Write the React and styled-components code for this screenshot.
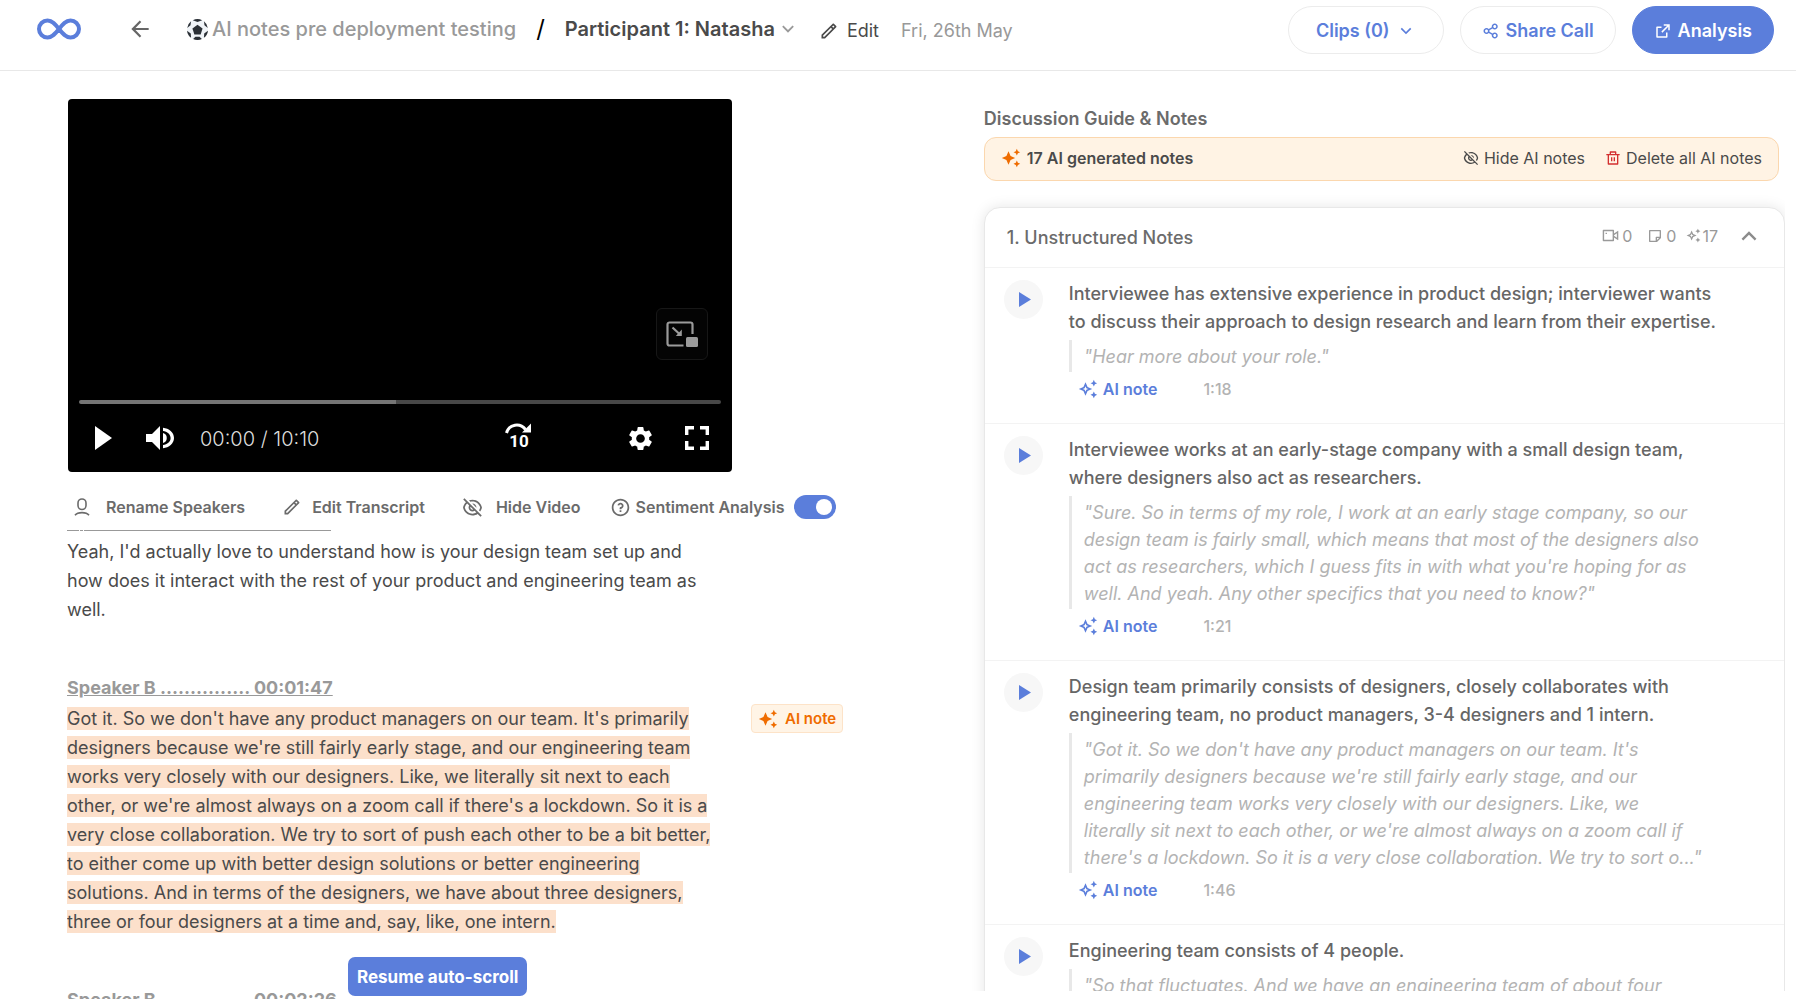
import React from "react";
import styled, { createGlobalStyle } from "styled-components";
import {
  RiPencilLine,
  RiEyeOffLine,
  RiQuestionLine,
  RiShareLine,
  RiExternalLinkLine,
  RiDeleteBinLine,
  RiVidiconLine,
  RiStickyNoteLine,
  RiArrowLeftLine,
  RiArrowDownSLine,
  RiArrowUpSLine,
} from "react-icons/ri";
import { MdAutoAwesome, MdOutlineAutoAwesome, MdSettings } from "react-icons/md";

const BLUE = "#5b7edb";
const ORANGE = "#ef6c00";

const GlobalStyle = createGlobalStyle`
  * { box-sizing: border-box; }
  body {
    margin: 0;
    background: #fff;
    color: #4a4a4a;
    font-family: Inter, "Liberation Sans", sans-serif;
    font-size: 16px;
  }
  h1, h2, h3, p, ul, blockquote { margin: 0; padding: 0; }
  ul { list-style: none; }
  svg { display: block; flex: none; }
`;

const Page = styled.div`
  display: flex;
  flex-direction: column;
  height: 100vh;
  overflow: hidden;
`;

const PlainButton = styled.button`
  display: inline-flex;
  align-items: center;
  padding: 0;
  border: 0;
  background: none;
  color: inherit;
  font: inherit;
  cursor: pointer;
`;

/* ---------- Header ---------- */

const Header = styled.header`
  display: flex;
  align-items: center;
  flex: none;
  height: 71px;
  padding: 0 22px 18px 36px;
  border-bottom: 1px solid #e8e8e8;
`;

const HomeLink = styled.a`
  display: flex;
  margin-top: 6px;
`;

const BackButton = styled(PlainButton)`
  margin: 6px 34px 0 45px;
  color: #666;
`;

const ProjectLink = styled.a`
  display: flex;
  align-items: center;
  gap: 4px;
  margin-top: 6px;
  color: #999;
  font-size: 20px;
  font-weight: 500;
  line-height: 28px;
  text-decoration: none;
  white-space: nowrap;
`;

const Slash = styled.span`
  margin: 6px 20px 0;
  color: #000;
  font-size: 24px;
  line-height: 28px;
`;

const ParticipantButton = styled(PlainButton)`
  gap: 2px;
  margin-top: 6px;
  font-size: 20px;
  font-weight: 600;
  line-height: 28px;
  white-space: nowrap;

  svg { color: #999; }
`;

const EditButton = styled(PlainButton)`
  gap: 8px;
  margin: 10px 22px 0 20px;
  font-size: 18px;
  line-height: 28px;
`;

const CallDate = styled.span`
  margin-top: 10px;
  color: #999;
  font-size: 18px;
  line-height: 28px;
  white-space: nowrap;
`;

const HeaderActions = styled.div`
  display: flex;
  gap: 16px;
  margin-left: auto;
  padding-top: 8px;
`;

const PillButton = styled.button`
  display: inline-flex;
  align-items: center;
  justify-content: center;
  gap: 6px;
  height: 48px;
  padding: 1px ${(p) => (p.$wide ? 27 : 21)}px 0;
  border: 1px solid ${(p) => (p.$filled ? BLUE : "#ececec")};
  border-radius: 24px;
  background: ${(p) => (p.$filled ? BLUE : "#fff")};
  color: ${(p) => (p.$filled ? "#fff" : BLUE)};
  font: 600 18px/24px Inter, "Liberation Sans", sans-serif;
  white-space: nowrap;
  cursor: pointer;
`;

/* ---------- Columns ---------- */

const Columns = styled.main`
  display: grid;
  grid-template-columns: 27fr 23fr;
  flex: 1;
  min-height: 0;
`;

const CallColumn = styled.section`
  position: relative;
  display: flex;
  flex-direction: column;
  min-height: 0;
  padding: 28px 0 0 67px;
`;

const NotesColumn = styled.section`
  min-height: 0;
  margin: 0 11px 8px 0;
  padding: 34px 0 0 14px;
  overflow: hidden;
`;

/* ---------- Video player ---------- */

const Player = styled.div`
  display: flex;
  flex-direction: column;
  justify-content: flex-end;
  flex: none;
  width: 100%;
  max-width: 664px;
  aspect-ratio: 664 / 373;
  margin-left: 1px;
  padding: 0 11px 12px;
  border-radius: 4px;
  background: #000;
  color: #fff;
`;

const PipButton = styled(PlainButton)`
  align-self: flex-end;
  justify-content: center;
  width: 52px;
  height: 52px;
  margin: 0 13px 40px 0;
  border: 1px solid #171717;
  border-radius: 6px;
  background: #040404;
  color: #9b9b9b;
`;

const SeekBar = styled.input`
  appearance: none;
  width: 100%;
  height: 4px;
  margin: 0;
  border-radius: 2px;
  background: linear-gradient(to right, #757575 317px, #484848 317px);

  &::-webkit-slider-thumb {
    appearance: none;
    width: 0;
    height: 4px;
  }
`;

const Controls = styled.div`
  display: flex;
  align-items: center;
  height: 44px;
  margin-top: 12px;
  padding: 0 12px 0 16px;
`;

const Time = styled.span`
  margin: 0 auto 0 26px;
  padding-top: 1px;
  color: #ddd;
  font-size: 20px;
  font-weight: 300;
  line-height: 24px;
`;

const ControlGroup = styled.div`
  display: flex;
  align-items: center;
  gap: ${(p) => p.$gap}px;
`;

/* ---------- Transcript ---------- */

const Tools = styled.div`
  display: flex;
  align-items: center;
  flex: none;
  height: 46px;
  margin-top: 12px;
  padding-left: 7px;
  color: #6b6b6b;
  font-size: 16px;
  font-weight: 600;
  line-height: 24px;
  white-space: nowrap;
`;

const ToolButton = styled(PlainButton)`
  gap: ${(p) => p.$gap}px;
  margin-right: ${(p) => p.$after}px;
`;

const ToggleLabel = styled.label`
  display: inline-flex;
  align-items: center;
  gap: 5px;
`;

const Toggle = styled.input`
  appearance: none;
  display: flex;
  align-items: center;
  justify-content: flex-end;
  width: 42px;
  height: 24px;
  margin: 0 0 0 4px;
  padding: 0 4px;
  border-radius: 12px;
  background: ${BLUE};

  &::before {
    content: "";
    width: 16px;
    height: 16px;
    border-radius: 8px;
    background: #fff;
  }
`;

const Transcript = styled.div`
  flex: 1;
  min-height: 0;
  overflow: hidden;
`;

const SpeakerRule = styled.hr`
  width: 264px;
  height: 1px;
  margin: 0 0 6px;
  border: 0;
  background: linear-gradient(
    to right,
    #999 12px, transparent 12px 13px,
    #999 13px 16px, transparent 16px 17px,
    #999 17px
  );
`;

const Turns = styled.div`
  display: flex;
  flex-direction: column;
  gap: 49px;
`;

const Speaker = styled.h3`
  margin-bottom: 2px;
  color: #999;
  font-size: 18px;
  font-weight: 700;
  line-height: 29px;
  text-decoration: underline;
`;

const TurnBody = styled.div`
  display: flex;
  align-items: flex-start;
  gap: 34px;
`;

const Speech = styled.p`
  flex: 0 1 650px;
  font-size: 18px;
  line-height: 29px;
`;

const Highlight = styled.mark`
  padding: 1px 0;
  background: #fce0cb;
  color: inherit;
`;

const NoteTag = styled.span`
  display: flex;
  align-items: center;
  gap: 7px;
  height: 29px;
  padding: 0 6px;
  border: 1px solid #fde3c8;
  border-radius: 4px;
  background: #fff4e6;
  color: ${ORANGE};
  font-size: 15px;
  font-weight: 600;
  white-space: nowrap;
`;

const ResumeButton = styled.button`
  position: absolute;
  bottom: 3px;
  left: 348px;
  height: 39px;
  padding: 0 9px;
  border: 0;
  border-radius: 7px;
  background: ${BLUE};
  color: #fff;
  font: 700 17px/24px Inter, "Liberation Sans", sans-serif;
  cursor: pointer;
`;

/* ---------- Notes ---------- */

const NotesTitle = styled.h2`
  color: #6b6b6b;
  font-size: 18px;
  font-weight: 600;
  line-height: 28px;
`;

const Banner = styled.div`
  display: flex;
  align-items: center;
  height: 44px;
  margin: 4px 6px 26px 0;
  padding: 0 16px 2px;
  border: 1px solid #fbd7ae;
  border-radius: 12px;
  background: #fff3e4;
  font-size: 16px;
  line-height: 24px;
  white-space: nowrap;
`;

const BannerCount = styled.strong`
  display: flex;
  align-items: center;
  gap: 6px;
  margin-right: auto;
  font-weight: 600;

  svg { color: ${ORANGE}; }
`;

const BannerButton = styled(PlainButton)`
  gap: 5px;
  margin-left: 20px;
`;

const Card = styled.article`
  border: 1px solid #e8e8e8;
  border-radius: 16px;
  background: #fff;
  box-shadow: 0 0 14px rgba(0, 0, 0, 0.1);
`;

const CardHeader = styled.header`
  display: flex;
  align-items: center;
  height: 59px;
  padding: 0 21px 0 22px;
`;

const CardTitle = styled.h3`
  margin-right: auto;
  color: #6b6b6b;
  font-size: 18px;
  font-weight: 500;
  line-height: 28px;
`;

const Count = styled.span`
  display: flex;
  align-items: center;
  gap: ${(p) => p.$gap}px;
  margin: 0 0 4px ${(p) => p.$before}px;
  color: #999;
  font-size: 16px;
  line-height: 24px;
`;

const CollapseButton = styled(PlainButton)`
  margin: 0 0 4px 17px;
  color: #8c8c8c;
`;

const NoteItem = styled.li`
  display: flex;
  align-items: flex-start;
  gap: 26px;
  padding: 12px 20px 22px 19px;
  border-top: 1px solid #f3f3f3;
`;

const PlayNote = styled(PlainButton)`
  justify-content: center;
  flex: none;
  width: 39px;
  height: 39px;
  padding-left: 3px;
  border-radius: 20px;
  background: #f7f7f7;
  color: ${BLUE};
`;

const NoteBody = styled.div`
  flex: 0 1 660px;
`;

const NoteText = styled.p`
  color: #666;
  font-size: 18px;
  font-weight: 500;
  line-height: 28px;
`;

const Quote = styled.blockquote`
  max-width: 636px;
  margin: 4px 0 5px;
  padding: 3px 0 2px 12px;
  border-left: 3px solid #e8e8e8;
  color: #b3b3b3;
  font-size: 18px;
  font-style: italic;
  line-height: 27px;
`;

const NoteMeta = styled.div`
  display: flex;
  align-items: center;
  gap: 46px;
  height: 24px;
  padding-left: 9px;
  font-size: 16px;
  font-weight: 500;
`;

const NoteSource = styled.span`
  display: flex;
  align-items: center;
  gap: 5px;
  color: ${BLUE};
  font-weight: 600;
`;

const Timestamp = styled.span`
  color: #b3b3b3;
`;

/* ---------- Drawings ---------- */

const Logo = () => (
  <svg width="46" height="22" viewBox="0 0 46 22" fill="none" stroke={BLUE} strokeWidth="4">
    <path d="M23 11C19.5 6.500 16.500 2.500 11.500 2.500a8.500 8.500 0 0 0 0 17C16.500 19.500 19.500 15.500 23 11S29.500 2.500 34.500 2.500a8.500 8.500 0 0 1 0 17C29.500 19.500 26.500 15.500 23 11z" />
  </svg>
);

const Ball = () => (
  <svg width="21" height="21" viewBox="0 0 36 36">
    <circle cx="18" cy="18" r="18" fill="#f0f4f8" />
    <g fill="#2b3036">
      <path d="M18 10l8.700 6.300-3.300 10.200H12.600L9.300 16.300z" />
      <path d="M10 2a18 18 0 0 1 16 0L18 5z" />
      <path d="M29 3.800a18 18 0 0 1 6.700 11.500L30 10.500z" />
      <path d="M7 3.800A18 18 0 0 0 .3 15.300L6 10.500z" />
      <path d="M36 20a18 18 0 0 1-7 12.200l.5-7.500z" />
      <path d="M0 20a18 18 0 0 0 7 12.200l-.5-7.500z" />
      <path d="M10.500 34.300a18 18 0 0 0 15 0L21.500 30.500h-7z" />
    </g>
  </svg>
);

const PersonIcon = () => (
  <svg width="16" height="18" viewBox="0 0 16 18" fill="none" stroke="currentColor" strokeWidth="1.600">
    <rect x="4" y="1" width="8" height="10.500" rx="4" />
    <path d="M1 17.200C2.500 15.300 5 14.600 8 14.600s5.500.7 7 2.600" />
  </svg>
);

const PlayIcon = ({ width, height }) => (
  <svg width={width} height={height} viewBox="0 0 17 24" preserveAspectRatio="none" fill="currentColor">
    <path d="M0 0l17 12L0 24z" />
  </svg>
);

const VolumeIcon = () => (
  <svg width="28" height="24" viewBox="0 0 28 24" fill="currentColor">
    <path d="M0 8h6l8-8v24l-8-8H0z" />
    <path d="M17 7a5.200 5.200 0 0 1 0 10z" />
    <path d="M17 1.800c6 .6 11 4.600 11 10.200s-5 9.600-11 10.200v-3.100c4.200-.6 7.600-3.200 7.600-7.100S21.200 5.500 17 4.900z" />
  </svg>
);

const Forward10Icon = () => (
  <svg width="26" height="34" viewBox="0 -2 26 34">
    <path d="M1.500 10C4 1 15 -.5 20.500 6.500" fill="none" stroke="#fff" strokeWidth="3" />
    <path d="M26 .5v9h-9z" fill="#fff" />
    <text x="14" y="24" textAnchor="middle" fill="#fff" fontFamily="Roboto, sans-serif" fontSize="17" fontWeight="700">
      10
    </text>
  </svg>
);

const FullscreenIcon = () => (
  <svg width="24" height="24" viewBox="0 0 24 24" fill="none" stroke="#fff" strokeWidth="3.400">
    <path d="M1.700 9V1.700H9M15 1.700h7.300V9M22.300 15v7.300H15M9 22.300H1.700V15" />
  </svg>
);

const PipIcon = () => (
  <svg width="32" height="26" viewBox="0 0 32 26" fill="none" stroke="currentColor" strokeWidth="2.200">
    <path d="M26.500 13V3.500a2 2 0 0 0-2-2h-21a2 2 0 0 0-2 2v19a2 2 0 0 0 2 2h14" />
    <path d="M6.500 6.500l7 6.500" />
    <path d="M15.800 8.500v6.500h-6z" fill="currentColor" stroke="none" />
    <rect x="20" y="16" width="12" height="10" rx="1.500" fill="currentColor" stroke="none" />
  </svg>
);

/* ---------- Data ---------- */

const turns = [
  {
    text: "Yeah, I'd actually love to understand how is your design team set up and how does it interact with the rest of your product and engineering team as well.",
  },
  {
    speaker: "Speaker B ............... 00:01:47",
    text: "Got it. So we don't have any product managers on our team. It's primarily designers because we're still fairly early stage, and our engineering team works very closely with our designers. Like, we literally sit next to each other, or we're almost always on a zoom call if there's a lockdown. So it is a very close collaboration. We try to sort of push each other to be a bit better, to either come up with better design solutions or better engineering solutions. And in terms of the designers, we have about three designers, three or four designers at a time and, say, like, one intern.",
    noted: true,
  },
  { speaker: "Speaker B ............... 00:02:26", text: "" },
];

const notes = [
  {
    text: "Interviewee has extensive experience in product design; interviewer wants to discuss their approach to design research and learn from their expertise.",
    quote: "\"Hear more about your role.\"",
    time: "1:18",
  },
  {
    text: "Interviewee works at an early-stage company with a small design team, where designers also act as researchers.",
    quote:
      "\"Sure. So in terms of my role, I work at an early stage company, so our design team is fairly small, which means that most of the designers also act as researchers, which I guess fits in with what you're hoping for as well. And yeah. Any other specifics that you need to know?\"",
    time: "1:21",
  },
  {
    text: "Design team primarily consists of designers, closely collaborates with engineering team, no product managers, 3-4 designers and 1 intern.",
    quote:
      "\"Got it. So we don't have any product managers on our team. It's primarily designers because we're still fairly early stage, and our engineering team works very closely with our designers. Like, we literally sit next to each other, or we're almost always on a zoom call if there's a lockdown. So it is a very close collaboration. We try to sort o...\"",
    time: "1:46",
  },
  {
    text: "Engineering team consists of 4 people.",
    quote: "\"So that fluctuates. And we have an engineering team of about four",
  },
];

/* ---------- Page ---------- */

export default function App() {
  return (
    <Page>
      <GlobalStyle />
      <Header>
        <HomeLink href="#home" aria-label="Home">
          <Logo />
        </HomeLink>
        <BackButton aria-label="Back">
          <RiArrowLeftLine size={26} />
        </BackButton>
        <ProjectLink href="#project">
          <Ball />
          AI notes pre deployment testing
        </ProjectLink>
        <Slash>/</Slash>
        <ParticipantButton>
          Participant 1: Natasha
          <RiArrowDownSLine size={22} />
        </ParticipantButton>
        <EditButton>
          <RiPencilLine size={20} />
          Edit
        </EditButton>
        <CallDate>Fri, 26th May</CallDate>
        <HeaderActions>
          <PillButton $wide>
            Clips (0)
            <RiArrowDownSLine size={20} />
          </PillButton>
          <PillButton>
            <RiShareLine size={18} />
            Share Call
          </PillButton>
          <PillButton $filled>
            <RiExternalLinkLine size={18} />
            Analysis
          </PillButton>
        </HeaderActions>
      </Header>

      <Columns>
        <CallColumn>
          <Player>
            <PipButton aria-label="Picture in picture">
              <PipIcon />
            </PipButton>
            <SeekBar type="range" min="0" max="610" defaultValue="0" aria-label="Seek" />
            <Controls>
              <ControlGroup $gap={34}>
                <PlainButton aria-label="Play">
                  <PlayIcon width={17} height={24} />
                </PlainButton>
                <PlainButton aria-label="Mute">
                  <VolumeIcon />
                </PlainButton>
              </ControlGroup>
              <Time>00:00 / 10:10</Time>
              <ControlGroup $gap={95}>
                <PlainButton aria-label="Forward 10 seconds">
                  <Forward10Icon />
                </PlainButton>
                <ControlGroup $gap={30}>
                  <PlainButton aria-label="Settings">
                    <MdSettings size={29} />
                  </PlainButton>
                  <PlainButton aria-label="Full screen">
                    <FullscreenIcon />
                  </PlainButton>
                </ControlGroup>
              </ControlGroup>
            </Controls>
          </Player>

          <Tools>
            <ToolButton $gap={16} $after={37}>
              <PersonIcon />
              Rename Speakers
            </ToolButton>
            <ToolButton $gap={10} $after={37}>
              <RiPencilLine size={20} />
              Edit Transcript
            </ToolButton>
            <ToolButton $gap={13} $after={29}>
              <RiEyeOffLine size={21} />
              Hide Video
            </ToolButton>
            <ToggleLabel>
              <RiQuestionLine size={21} />
              Sentiment Analysis
              <Toggle type="checkbox" defaultChecked />
            </ToggleLabel>
          </Tools>

          <Transcript>
            <SpeakerRule />
            <Turns>
              {turns.map((turn) => (
                <div key={turn.text}>
                  {turn.speaker && <Speaker>{turn.speaker}</Speaker>}
                  <TurnBody>
                    <Speech>{turn.noted ? <Highlight>{turn.text}</Highlight> : turn.text}</Speech>
                    {turn.noted && (
                      <NoteTag>
                        <MdAutoAwesome size={20} />
                        AI note
                      </NoteTag>
                    )}
                  </TurnBody>
                </div>
              ))}
            </Turns>
          </Transcript>
          <ResumeButton>Resume auto-scroll</ResumeButton>
        </CallColumn>

        <NotesColumn>
          <NotesTitle>Discussion Guide &amp; Notes</NotesTitle>
          <Banner>
            <BannerCount>
              <MdAutoAwesome size={20} />
              17 AI generated notes
            </BannerCount>
            <BannerButton>
              <RiEyeOffLine size={16} />
              Hide AI notes
            </BannerButton>
            <BannerButton>
              <RiDeleteBinLine size={16} color="#d32f2f" />
              Delete all AI notes
            </BannerButton>
          </Banner>
          <Card>
            <CardHeader>
              <CardTitle>1. Unstructured Notes</CardTitle>
              <Count $gap={3} $before={0}>
                <RiVidiconLine size={17} />0
              </Count>
              <Count $gap={3} $before={15}>
                <RiStickyNoteLine size={16} />0
              </Count>
              <Count $gap={1} $before={10}>
                <MdOutlineAutoAwesome size={15} />
                17
              </Count>
              <CollapseButton aria-label="Collapse section">
                <RiArrowUpSLine size={28} />
              </CollapseButton>
            </CardHeader>
            <ul>
              {notes.map((note) => (
                <NoteItem key={note.text}>
                  <PlayNote aria-label="Play note">
                    <PlayIcon width={12} height={15} />
                  </PlayNote>
                  <NoteBody>
                    <NoteText>{note.text}</NoteText>
                    <Quote>{note.quote}</Quote>
                    {note.time && (
                      <NoteMeta>
                        <NoteSource>
                          <MdOutlineAutoAwesome size={20} />
                          AI note
                        </NoteSource>
                        <Timestamp>{note.time}</Timestamp>
                      </NoteMeta>
                    )}
                  </NoteBody>
                </NoteItem>
              ))}
            </ul>
          </Card>
        </NotesColumn>
      </Columns>
    </Page>
  );
}
